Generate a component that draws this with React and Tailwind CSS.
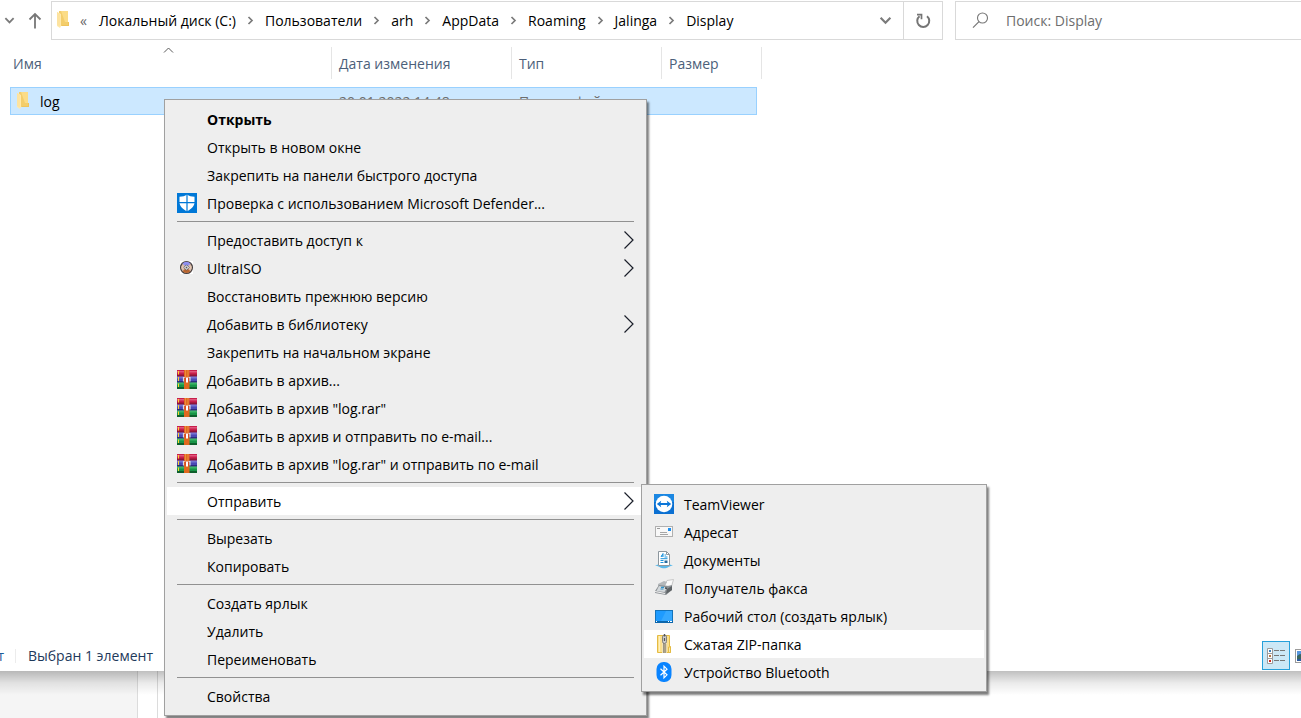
import React from "react";

function FolderIcon() {
  return (
    <svg width="14" height="18" viewBox="0 0 14 18" className="mb-px shrink-0" aria-hidden="true">
      <path d="M3 0h9v11h1v4H3z" fill="#f3cd6b" />
      <path d="M5 0h7v11h-3z" fill="#fbdc87" />
      <path d="M1 1l4 2v12l-1 2-3-2z" fill="#ffe9ab" />
      <path d="M1 1l3 2v12.500l-3-1.500z" fill="#fde3a0" />
      <path d="M12 11h1v4H6v-1h6z" fill="#efc45c" />
    </svg>
  );
}

function CrumbArrow() {
  return (
    <svg width="7" height="10" viewBox="0 0 7 10" className="shrink-0" aria-hidden="true">
      <path d="M1.500 1L5 4.500 1.500 8" fill="none" stroke="#7a7a7a" strokeWidth="1.700" />
    </svg>
  );
}

function ChevronDown({ size }) {
  return (
    <svg width={size} height={size} viewBox="0 0 12 12" className="shrink-0" aria-hidden="true">
      <path d="M1.500 3.500L6 8l4.500-4.500" fill="none" stroke="#7b7b7b" strokeWidth="2" />
    </svg>
  );
}

function DefenderIcon() {
  return (
    <svg width="20" height="20" viewBox="0 0 20 20" aria-hidden="true">
      <rect width="20" height="20" fill="#0078d7" />
      <path d="M10 1.500c2 1.600 4.500 2.200 7.500 2.200v5.500c0 4-3.300 7-7.500 9-4.200-2-7.500-5-7.500-9V3.700c3 0 5.500-.6 7.500-2.200z" fill="#fff" />
      <path d="M10 1v18M2 9.700h16" stroke="#0078d7" strokeWidth="1.200" />
    </svg>
  );
}

function DiscIcon() {
  return (
    <svg width="20" height="20" viewBox="0 0 20 20" aria-hidden="true">
      <rect x="3" y="3" width="13" height="13" fill="#fff" />
      <circle cx="9.500" cy="9.500" r="5.900" fill="#d9bba9" stroke="#453f3f" strokeWidth="1.300" />
      <path d="M9.500 9.500L5.500 5.500a5.300 5.300 0 0 1 8 0z" fill="#8e8ff0" />
      <path d="M9.500 9.500l-4 3.800a5.300 5.300 0 0 0 8 0z" fill="#b9652f" />
      <path d="M9.500 9.500L4.500 8v3zM9.500 9.500l5-1.500v3z" fill="#e6c8b4" />
      <path d="M9.500 6.800l2.700 2.700-2.700 2.700-2.700-2.700z" fill="#fff" stroke="#4b4b55" strokeWidth=".8" />
      <circle cx="9.500" cy="9.500" r="1" fill="#555" />
    </svg>
  );
}

function ArchiveIcon() {
  return (
    <svg width="20" height="20" viewBox="0 0 20 20" aria-hidden="true">
      <rect y="0" width="20" height="6.500" fill="#c71f4b" />
      <rect y="1" width="20" height="1.500" fill="#e0557c" />
      <rect y="4.500" width="20" height="2" fill="#8f1437" />
      <rect y="6.500" width="20" height="6" fill="#4a49b5" />
      <rect y="7" width="20" height="1.500" fill="#7473d2" />
      <rect y="11" width="20" height="1.500" fill="#2c2b7d" />
      <rect y="12.500" width="20" height="6.500" fill="#189447" />
      <rect y="13" width="20" height="1.500" fill="#3bb566" />
      <rect y="17" width="20" height="2" fill="#0e5f2c" />
      <path d="M1.500 1v3.500M1.500 7v4M1.500 13.500V17" stroke="#ffd52e" strokeWidth="1" />
      <rect x="7" width="5.500" height="19" fill="#e0691f" />
      <path d="M8.500 0v8M11 0v8" stroke="#ef9447" strokeWidth=".8" />
      <path d="M6.500 11.500v-4h2M13 11.500v-4h-2" fill="none" stroke="#d9d9df" strokeWidth="1.200" />
      <rect x="7.500" y="7.500" width="4.500" height="4" fill="#d84a26" />
      <rect x="9" y="7.500" width="2" height="5" fill="#fff" />
    </svg>
  );
}

function TeamViewerIcon() {
  return (
    <svg width="20" height="20" viewBox="0 0 20 20" aria-hidden="true">
      <rect width="20" height="20" fill="#0b70d2" />
      <rect width="20" height="8" fill="#1b87e2" />
      <circle cx="10" cy="10" r="8.300" fill="#fff" />
      <path d="M2.800 10l4.400-3.300-.6 2.300h6.800l-.6-2.300L17.200 10l-4.400 3.300.6-2.300H6.600l.6 2.300z" fill="#0b76d8" />
    </svg>
  );
}

function MailIcon() {
  return (
    <svg width="20" height="20" viewBox="0 0 20 20" aria-hidden="true">
      <rect x="1.500" y="4.500" width="17" height="10" fill="#f8f8f8" stroke="#b0b0b0" />
      <path d="M3 6.500h3" stroke="#9a9a9a" />
      <path d="M6 10.500h7M6 12.500h8" stroke="#a6a6a6" />
      <rect x="14" y="6" width="3" height="3" fill="#1e90f0" />
    </svg>
  );
}

function DocumentsIcon() {
  return (
    <svg width="20" height="20" viewBox="0 0 20 20" aria-hidden="true">
      <path d="M1 15.300c3-1.500 15-1.500 18 0-2 1-4 1-5 2-2 1.300-6 1.300-8 0-1-1-3-1-5-2z" fill="#58b8ea" />
      <path d="M3 14.800c3-.8 11-.8 14 0l-3 1H6z" fill="#a7def8" />
      <path d="M4.500 1.500h8l3 3v11h-11z" fill="#fff" stroke="#8d979e" />
      <path d="M12.500 1.500v3h3" fill="none" stroke="#8d979e" />
      <path d="M7 7l2-3.500V7M7 6h2M10.500 5h1.500M10.500 7h3M6.500 8.700h7M6.500 10.500h3M6.500 12.500h3" fill="none" stroke="#1c93dc" />
      <rect x="10.500" y="10.500" width="3" height="2.500" fill="#286a9b" />
    </svg>
  );
}

function FaxIcon() {
  return (
    <svg width="20" height="20" viewBox="0 0 20 20" aria-hidden="true">
      <path d="M10 8l3-5.500 6.500-1-2 7z" fill="#fafafa" stroke="#bdbdbd" strokeWidth=".8" />
      <path d="M4 6l6-3 3 1-2 4-7 2z" fill="#b4b8bb" />
      <path d="M1 13l4-6 9 1 4-1v5l-6 5-11-2z" fill="#8d9296" />
      <path d="M5 8l8 1.500-2.500 4.500-8-1z" fill="#d4d9dc" />
      <path d="M7 9.300h3M6.500 11h3" stroke="#2f92c9" strokeWidth="1.200" />
      <path d="M12 16l1-5 5-3v4z" fill="#5d6265" />
      <path d="M1 13.500l10 2" stroke="#f3f3f3" strokeWidth="1.200" />
      <path d="M11 10l2 .2" stroke="#42474a" strokeWidth="1.500" />
    </svg>
  );
}

function DesktopIcon() {
  return (
    <svg width="20" height="20" viewBox="0 0 20 20" aria-hidden="true">
      <rect x="1.500" y="4.500" width="17" height="12" fill="#1e9bff" stroke="#1473ba" />
      <path d="M12 5h6v10H7z" fill="#35a8ff" />
      <rect x="1" y="15" width="18" height="2" fill="#0c66ac" />
      <path d="M2 15.500h1M14 15.500h1M16 15.500h2" stroke="#fff" />
    </svg>
  );
}

function ZipIcon() {
  return (
    <svg width="20" height="20" viewBox="0 0 20 20" aria-hidden="true">
      <path d="M3.500 1.500h12v11h1v6h-13z" fill="#fbe08e" stroke="#e4bb43" />
      <path d="M14.500 18.500v-5.500h2v5.500z" fill="#fbe9a9" stroke="#e4bb43" />
      <path d="M5.500 2v16" stroke="#fff0bb" />
      <rect x="8" y="8" width="5" height="11" fill="#f2e3b6" />
      <path d="M9.800 9.500V19" stroke="#4a4a4a" strokeWidth="1.600" strokeDasharray="1 1" />
      <path d="M11.400 10.500V19" stroke="#5a5a5a" strokeWidth="1.600" strokeDasharray="1 1" />
      <rect x="8.500" y="1" width="4" height="8.500" rx="2" fill="#cccccc" stroke="#6c6c6c" strokeWidth=".8" />
      <path d="M10.500 0v2.500M10.500 4v3" stroke="#555" strokeWidth="1.200" />
    </svg>
  );
}

function BluetoothIcon() {
  return (
    <svg width="20" height="20" viewBox="0 0 20 20" aria-hidden="true">
      <rect x="2.500" width="15" height="20" rx="7" fill="#0a84ff" />
      <path d="M6.500 6.800l6.500 6L10 15.800V4.200L13 7.200l-6.500 6" fill="none" stroke="#fff" strokeWidth="1.200" />
    </svg>
  );
}

function SubmenuArrow() {
  return (
    <svg width="11" height="18" viewBox="0 0 11 18" className="ml-auto shrink-0" aria-hidden="true">
      <path d="M.5.500l8.500 8.500L.5 17.500" fill="none" stroke="#1b1f2a" strokeWidth="1.200" />
    </svg>
  );
}

const GROUPS = [
  [
    { label: "Открыть", bold: true },
    { label: "Открыть в новом окне" },
    { label: "Закрепить на панели быстрого доступа" },
    { label: "Проверка с использованием Microsoft Defender...", Icon: DefenderIcon },
  ],
  [
    { label: "Предоставить доступ к", arrow: true },
    { label: "UltraISO", Icon: DiscIcon, arrow: true },
    { label: "Восстановить прежнюю версию" },
    { label: "Добавить в библиотеку", arrow: true },
    { label: "Закрепить на начальном экране" },
    { label: "Добавить в архив...", Icon: ArchiveIcon },
    { label: 'Добавить в архив "log.rar"', Icon: ArchiveIcon },
    { label: "Добавить в архив и отправить по e-mail...", Icon: ArchiveIcon },
    { label: 'Добавить в архив "log.rar" и отправить по e-mail', Icon: ArchiveIcon },
  ],
  [{ label: "Отправить", arrow: true, active: true, submenu: true }],
  [{ label: "Вырезать" }, { label: "Копировать" }],
  [{ label: "Создать ярлык" }, { label: "Удалить" }, { label: "Переименовать" }],
  [{ label: "Свойства" }],
];

const SEND_TO = [
  { label: "TeamViewer", Icon: TeamViewerIcon },
  { label: "Адресат", Icon: MailIcon },
  { label: "Документы", Icon: DocumentsIcon },
  { label: "Получатель факса", Icon: FaxIcon },
  { label: "Рабочий стол (создать ярлык)", Icon: DesktopIcon },
  { label: "Сжатая ZIP-папка", Icon: ZipIcon, active: true },
  { label: "Устройство Bluetooth", Icon: BluetoothIcon },
];

const PANEL = "border border-[#a0a0a0] bg-[#eeeeee] px-0.5 py-[5px] shadow-[2px_3px_2px_rgba(0,0,0,0.5)]";

function MenuItem({ label, Icon, arrow, active, bold, submenu }) {
  return (
    <li className="relative">
      <button
        type="button"
        className={`flex h-7 w-full items-center gap-2.5 pl-2.5 pr-[9px] text-left whitespace-nowrap ${active ? "bg-white" : ""} ${bold ? "font-bold" : ""}`}
      >
        <span className="size-5 shrink-0">{Icon && <Icon />}</span>
        <span className="pt-0.5">{label}</span>
        {arrow && <SubmenuArrow />}
      </button>
      {submenu && (
        <ul className={`absolute -top-[3px] left-full z-10 -ml-[3px] w-[346px] ${PANEL}`}>
          {SEND_TO.map((item) => (
            <MenuItem key={item.label} {...item} />
          ))}
        </ul>
      )}
    </li>
  );
}

function ContextMenu() {
  return (
    <div className={`absolute left-[164px] top-[99px] w-[483px] text-black ${PANEL}`}>
      {GROUPS.map((group, i) => (
        <React.Fragment key={i}>
          {i > 0 && <hr className="mx-2.5 my-1 border-t border-[#919191]" />}
          <ul>
            {group.map((item) => (
              <MenuItem key={item.label} {...item} />
            ))}
          </ul>
        </React.Fragment>
      ))}
    </div>
  );
}

const CRUMBS = ["Локальный диск (C:)", "Пользователи", "arh", "AppData", "Roaming", "Jalinga", "Display"];

function Toolbar() {
  return (
    <header className="flex items-center pt-px">
      <button type="button" aria-label="Последние расположения" className="flex w-[18px] justify-center">
        <ChevronDown size={11} />
      </button>
      <button type="button" aria-label="Вверх" className="flex w-[33px] justify-center">
        <svg width="14" height="17" viewBox="0 0 14 17" aria-hidden="true">
          <path d="M7 16.500V2M1.500 7.500L7 2l5.500 5.500" fill="none" stroke="#777777" strokeWidth="1.800" />
        </svg>
      </button>
      <div className="flex h-[39px] min-w-0 flex-1 items-center border border-[#d9d9d9] pl-1">
        <FolderIcon />
        <span className="w-[29px] pl-2.5 text-[#666666]">«</span>
        <nav className="flex items-center gap-[11px] whitespace-nowrap text-black">
          {CRUMBS.map((name, i) => (
            <React.Fragment key={name}>
              {i > 0 && <CrumbArrow />}
              <button type="button">{name}</button>
            </React.Fragment>
          ))}
        </nav>
        <button type="button" aria-label="Предыдущие расположения" className="ml-auto flex w-9 justify-center">
          <ChevronDown size={13} />
        </button>
        <button
          type="button"
          aria-label="Обновить"
          className="flex h-full w-[39px] items-center justify-center border-l border-[#d9d9d9]"
        >
          <svg width="16" height="16" viewBox="0 0 16 16" aria-hidden="true">
            <path d="M12 3.200a6 6 0 1 1-7.500 0" fill="none" stroke="#757575" strokeWidth="2" />
            <path d="M2 1.700h4.500v4.500" fill="none" stroke="#757575" strokeWidth="1.700" />
          </svg>
        </button>
      </div>
      <label className="ml-3 flex h-[39px] w-[346px] items-center gap-[17px] border border-r-0 border-[#d9d9d9] pl-4">
        <svg width="17" height="17" viewBox="0 0 17 17" className="shrink-0" aria-hidden="true">
          <circle cx="10.500" cy="6" r="5" fill="none" stroke="#777777" strokeWidth="1.100" />
          <path d="M7 9.700L1 15.700" stroke="#777777" strokeWidth="1.200" />
        </svg>
        <input
          type="search"
          aria-label="Поиск"
          placeholder="Поиск: Display"
          className="min-w-0 flex-1 bg-transparent outline-none placeholder:text-[#6d6d6d]"
        />
      </label>
    </header>
  );
}

const HEAD = "flex h-8 items-center border-r border-[#e5e5e5] pt-0.5";
const CELL = "flex h-7 items-center border-y border-[#99d1ff] bg-[#cce8ff]";

function FileTable() {
  return (
    <table className="ml-2.5 mt-[7px] w-[752px] table-fixed text-left">
      <colgroup>
        <col className="w-[322px]" />
        <col className="w-[180px]" />
        <col className="w-[150px]" />
        <col className="w-[100px]" />
      </colgroup>
      <thead className="text-[#4c607a]">
        <tr>
          <th className="relative p-0 pb-2 font-normal">
            <div className={`${HEAD} pl-[3px]`}>Имя</div>
            <svg width="11" height="6" viewBox="0 0 11 6" className="absolute left-[153px] top-0" aria-hidden="true">
              <path d="M1 5.500l4.500-4.500L10 5.500" fill="none" stroke="#5a5a5a" />
            </svg>
          </th>
          <th className="p-0 pb-2 font-normal">
            <div className={`${HEAD} pl-[7px]`}>Дата изменения</div>
          </th>
          <th className="p-0 pb-2 font-normal">
            <div className={`${HEAD} pl-[7px]`}>Тип</div>
          </th>
          <th className="p-0 pb-2 font-normal">
            <div className={`${HEAD} pl-[7px]`}>Размер</div>
          </th>
        </tr>
      </thead>
      <tbody className="text-[#6d6d6d]">
        <tr>
          <td className="p-0">
            <div className={`${CELL} gap-2.5 border-l pl-[5px] text-black`}>
              <FolderIcon />
              <span className="pt-0.5">log</span>
            </div>
          </td>
          <td className="p-0">
            <div className={`${CELL} pl-[7px] pt-0.5`}>20.01.2022 14:48</div>
          </td>
          <td className="p-0">
            <div className={`${CELL} pl-[7px] pt-0.5`}>Папка с файлами</div>
          </td>
          <td className="p-0 pr-[5px]">
            <div className={`${CELL} border-r`} />
          </td>
        </tr>
      </tbody>
    </table>
  );
}

function StatusBar() {
  return (
    <footer className="mt-auto flex h-[30px] items-center overflow-hidden text-[#1e395b]">
      <span className="flex w-1 justify-end text-[#1e5c99]">т</span>
      <span className="ml-[11px] h-3.5 border-l border-[#ececec]" />
      <span className="ml-3">Выбран 1 элемент</span>
      <button
        type="button"
        aria-label="Таблица"
        className="ml-auto mb-px flex h-[29px] w-7 items-center justify-center border border-[#26a0da] bg-[#cce8f6]"
      >
        <svg width="18" height="16" viewBox="0 0 18 16" aria-hidden="true">
          <path d="M.5.500h5v15h-5zM.5 5.500h5M.5 10.500h5" fill="#fff" stroke="#9b9b9b" />
          <path d="M7 2.500h5M13 2.500h5M7 7.500h5M13 7.500h5M7 12.500h5M13 12.500h5" stroke="#777777" />
          <rect x="2" y="2" width="2" height="2" fill="#3c82bd" />
          <rect x="2" y="7" width="2" height="2" fill="#b57443" />
          <rect x="2" y="12" width="2" height="2" fill="#d02a20" />
        </svg>
      </button>
      <button type="button" aria-label="Крупные значки" className="ml-[5px] w-1.5 shrink-0 overflow-hidden">
        <svg width="18" height="14" viewBox="0 0 18 14" className="max-w-none" aria-hidden="true">
          <rect x=".5" y=".5" width="17" height="13" fill="#fff" stroke="#9b9b9b" />
          <rect x="2" y="2" width="14" height="10" fill="#5796de" />
          <path d="M2 7l3-2 11 3v4H2z" fill="#39665f" />
          <path d="M2 10h14v2H2z" fill="#2c5aa0" />
        </svg>
      </button>
    </footer>
  );
}

export default function App() {
  return (
    <div className="relative flex min-h-screen flex-col overflow-hidden bg-white font-['Open_Sans','Noto_Sans',sans-serif] text-sm leading-5">
      <main className="flex flex-1 flex-col">
        <Toolbar />
        <FileTable />
        <StatusBar />
      </main>
      <div className="relative flex h-[47px]">
        <div className="w-[138px] border-r border-[#dcdcdc] bg-[#f5f5f5]" />
        <div className="w-5 border-r border-[#dcdcdc]" />
        <div className="absolute inset-x-0 top-0 h-6 bg-linear-to-b from-black/25 via-black/8 to-transparent" />
      </div>
      <ContextMenu />
    </div>
  );
}
